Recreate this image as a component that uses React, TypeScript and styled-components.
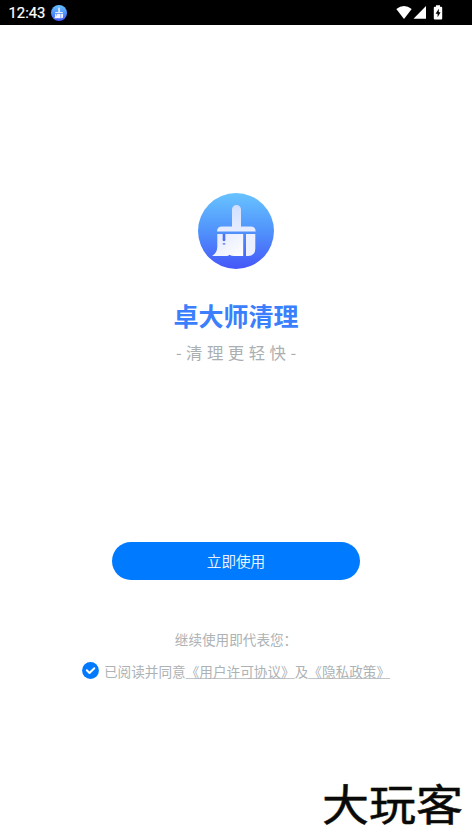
import React from "react";
import styled, { createGlobalStyle } from "styled-components";

const GlobalStyle = createGlobalStyle`
  * { box-sizing: border-box; }
  body { margin: 0; background: #fff; }
`;

const Screen = styled.div`
  width: 472px;
  height: 839px;
  overflow: hidden;
  display: flex;
  flex-direction: column;
  align-items: center;
  background: #fff;
  font-family: "Noto Sans CJK SC", sans-serif;
`;

const StatusBar = styled.header`
  width: 100%;
  height: 25px;
  flex: none;
  display: flex;
  align-items: center;
  justify-content: space-between;
  padding: 0 29px 0 8.5px;
  background: #000;
  color: #fff;
`;

const StatusGroup = styled.div<{ $gap: number }>`
  display: flex;
  align-items: center;
  gap: ${(p) => p.$gap}px;
  svg { display: block; }
`;

const Clock = styled.span`
  font: 400 14.8px/25px Roboto, sans-serif;
  -webkit-text-stroke: 0.2px #fff;
  padding-top: 1px;
`;

const Brand = styled.section`
  display: flex;
  flex-direction: column;
  align-items: center;
  padding-top: 168px;
  svg { display: block; }
`;

const Title = styled.h1`
  margin: 28px 0 0;
  font-size: 25px;
  line-height: 36px;
  font-weight: 700;
  color: #3c7ffc;
`;

const Slogan = styled.p`
  margin: 7px 0 0;
  font-size: 16.4px;
  line-height: 24px;
  word-spacing: 0.8px;
  white-space: nowrap;
  color: #aaafb2;
`;

const StartButton = styled.button`
  width: 248px;
  height: 38px;
  flex: none;
  margin-top: 178px;
  padding: 0;
  border: 0;
  border-radius: 19px;
  background: #007aff;
  color: #fff;
  font: 300 14.6px/38px "Noto Sans CJK SC", sans-serif;
  -webkit-text-stroke: 0.2px #fff;
`;

const Notice = styled.p`
  margin: 49px 0 0;
  font-size: 13.6px;
  line-height: 20px;
  color: #adb2b5;
`;

const Agreement = styled.div`
  display: flex;
  align-items: center;
  gap: 5px;
  height: 22px;
  margin-top: 11px;
  font-size: 13.63px;
  line-height: 22px;
  white-space: nowrap;
  color: #adb2b5;
  svg { display: block; flex: none; margin-bottom: 2px; }
`;

const Link = styled.span`
  text-decoration: underline;
  text-decoration-color: #c1c5c7;
  text-decoration-thickness: 1px;
  text-underline-offset: 1px;
  text-decoration-skip-ink: none;
`;

const Watermark = styled.footer`
  align-self: flex-end;
  margin: auto 9px 6px 0;
  font-size: 47px;
  line-height: 56px;
  font-weight: 400;
  color: #090909;
  text-shadow: 0 0 2px #ded9b8;
  -webkit-text-stroke: 0.5px #090909;
  transform: translateY(-2.5px) scaleY(0.91);
`;

const BrushLogo = ({ size, id }: { size: number; id: string }) => (
  <svg width={size} height={size} viewBox="0 0 76 76">
    <defs>
      <linearGradient id={`${id}-sky`} x1="0" y1="0" x2="0" y2="1">
        <stop offset="0" stopColor="#68c3ff" />
        <stop offset="0.5" stopColor="#5093fc" />
        <stop offset="1" stopColor="#4556f8" />
      </linearGradient>
      <linearGradient id={`${id}-handle`} x1="0" y1="0" x2="0" y2="1">
        <stop offset="0" stopColor="#d0dfff" />
        <stop offset="1" stopColor="#e8edff" />
      </linearGradient>
      <linearGradient id={`${id}-bristle`} x1="0" y1="0" x2="1" y2="1">
        <stop offset="0" stopColor="#e2e8ff" />
        <stop offset="1" stopColor="#fff" />
      </linearGradient>
    </defs>
    <circle cx="38" cy="38" r="38" fill={`url(#${id}-sky)`} />
    <path
      d="M34 33.5V16.5a4.5 4.5 0 0 1 9 0v17h9.5q5.2 0 5.2 5H19q0-5 5.2-5z"
      fill={`url(#${id}-handle)`}
    />
    <path
      d="M19.3 41h25.9v22H36.5q-3 .2-5-1.2-1 1.2-3 1.2H14q5-2.6 5.3-9z"
      fill={`url(#${id}-bristle)`}
    />
    <path d="M48 41h9.3v14.5q0 7-7 7.5H48z" fill="#edf0ff" />
    <path d="M26 41v6M26 50.2v1.4" stroke="#4d72f5" strokeWidth="2.6" />
    <circle cx="26" cy="47" r="1.3" fill="#4d72f5" />
  </svg>
);

const StatusIcons = () => (
  <svg width="47" height="17" viewBox="0 0 47 17" fill="#fff">
    <path d="M0.3 5Q8 -1 15.7 5L8 15z" />
    <path d="M30 2v12.8H17.5z" />
    <path d="M40 1.2h4v1.5h1.2q1 0 1 1v10.7q0 1-1 1h-6.4q-1 0-1-1V3.7q0-1 1-1H40z" />
    <path d="M42.8 4.7L39.6 9.7h2v3.6l3-5h-1.8z" fill="#000" />
  </svg>
);

const CheckIcon = () => (
  <svg width="17" height="17" viewBox="0 0 17 17">
    <circle cx="8.5" cy="8.5" r="8.4" fill="#007aff" />
    <path
      d="M4.8 8.3l2.7 2.7 4.8-4.8"
      fill="none"
      stroke="#fff"
      strokeWidth="2"
      strokeLinecap="round"
      strokeLinejoin="round"
    />
  </svg>
);

export default function App() {
  return (
    <Screen>
      <GlobalStyle />
      <StatusBar>
        <StatusGroup $gap={5.5}>
          <Clock>12:43</Clock>
          <BrushLogo size={16} id="mini" />
        </StatusGroup>
        <StatusGroup $gap={0}>
          <StatusIcons />
        </StatusGroup>
      </StatusBar>
      <Brand>
        <BrushLogo size={76} id="main" />
        <Title>卓大师清理</Title>
        <Slogan>- 清 理 更 轻 快 -</Slogan>
      </Brand>
      <StartButton>立即使用</StartButton>
      <Notice>继续使用即代表您：</Notice>
      <Agreement>
        <CheckIcon />
        <span>
          已阅读并同意<Link>《用户许可协议》</Link>及<Link>《隐私政策》</Link>
        </span>
      </Agreement>
      <Watermark>大玩客</Watermark>
    </Screen>
  );
}
